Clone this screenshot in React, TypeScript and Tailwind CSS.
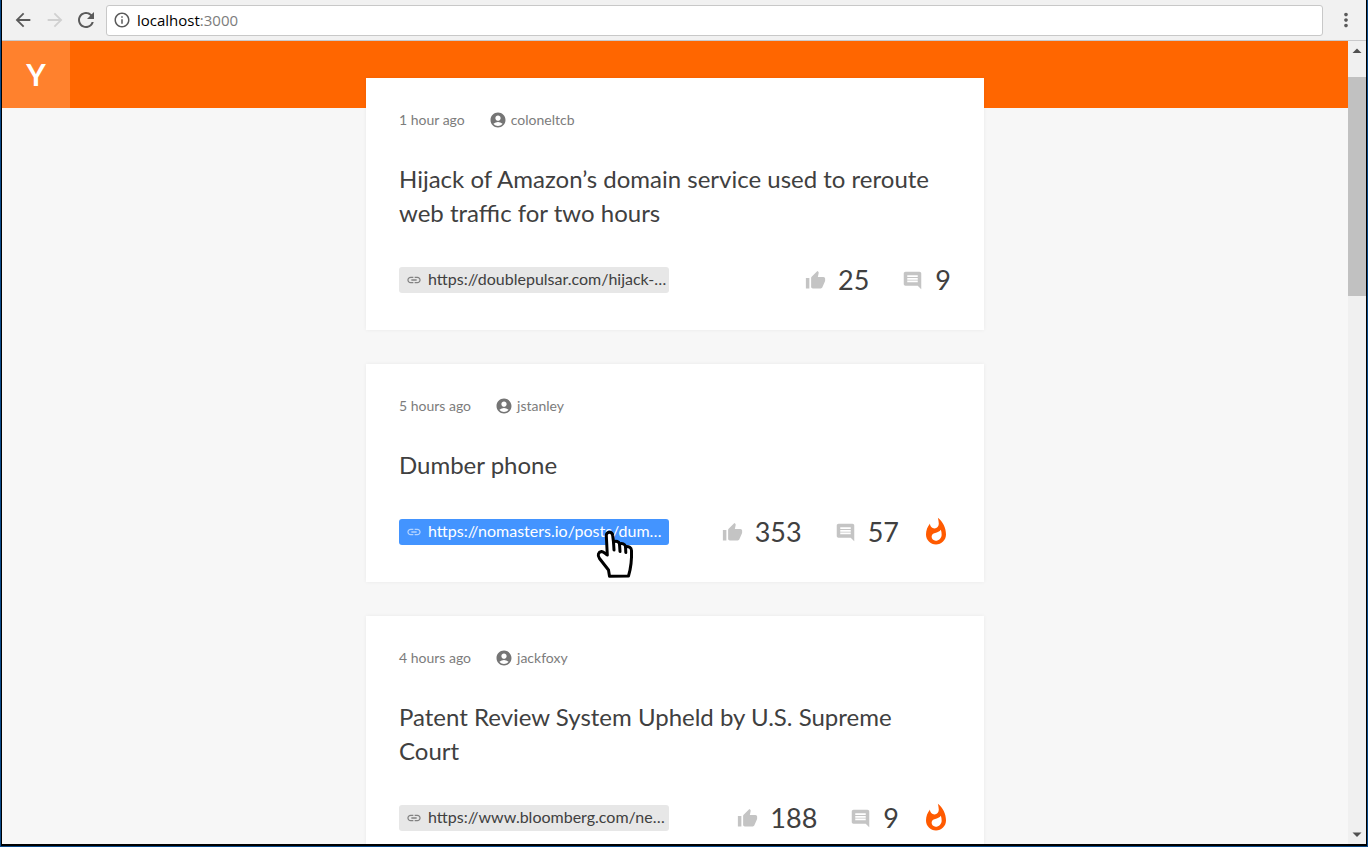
import {
  MdAccountCircle,
  MdArrowBack,
  MdArrowForward,
  MdInfoOutline,
  MdInsertComment,
  MdLink,
  MdMoreVert,
  MdRefresh,
  MdThumbUp,
  MdWhatshot,
} from "react-icons/md";

type Story = {
  age: string;
  author: string;
  title: string;
  url: string;
  votes: number;
  comments: number;
  hot?: boolean;
  active?: boolean;
};

const stories: Story[] = [
  {
    age: "1 hour ago",
    author: "coloneltcb",
    title: "Hijack of Amazon’s domain service used to reroute web traffic for two hours",
    url: "https://doublepulsar.com/hijack-…",
    votes: 25,
    comments: 9,
  },
  {
    age: "5 hours ago",
    author: "jstanley",
    title: "Dumber phone",
    url: "https://nomasters.io/posts/dum…",
    votes: 353,
    comments: 57,
    hot: true,
    active: true,
  },
  {
    age: "4 hours ago",
    author: "jackfoxy",
    title: "Patent Review System Upheld by U.S. Supreme Court",
    url: "https://www.bloomberg.com/ne…",
    votes: 188,
    comments: 9,
    hot: true,
  },
];

function HandCursor() {
  return (
    <svg
      viewBox="0 0 38 50"
      className="pointer-events-none absolute top-[11px] left-[197px] z-10 h-[50px] w-[38px]"
      fill="#fff"
      stroke="#000"
      strokeWidth="3"
      strokeLinejoin="round"
      strokeLinecap="round"
      aria-hidden="true"
    >
      <path d="M13.5 46.3 L12.5 40 L3.5 28.5 C1 25 2.5 22 5.5 21.5 C8 22 9.500 24 11.300 25 L10.300 5.500 C10.300 1.200 16.300 1.200 16.700 5.500 L17.500 12 C20 10.500 23 11.500 23.500 14 C26 12.800 29 14 29.500 16.500 C33 16 35.300 17.500 35.500 20.500 C35.800 28 35.500 36 32.500 46 Z" />
      <path d="M17.500 12 L18 20 M23.500 14 L24 21.500 M29.500 16.500 L29.800 22.500" fill="none" />
    </svg>
  );
}

function StoryCard({ story }: { story: Story }) {
  return (
    <article className="bg-white p-[33px] shadow-[0_0_4px_rgba(0,0,0,0.06)]">
      <div className="flex items-center gap-6 text-[14px] leading-[18px] text-[#7c7c7c]">
        <span>{story.age}</span>
        <a href="#author" className="flex items-center gap-1">
          <MdAccountCircle className="size-[18px] text-[#757575]" />
          {story.author}
        </a>
      </div>
      <h2 className="mt-[33px] text-[24px] leading-[34px] text-[#404040]">{story.title}</h2>
      <div className="mt-[33px] flex h-[34px] items-center justify-between">
        <div className="relative">
          <a
            href="#story"
            className={
              story.active
                ? "flex h-[26px] w-[270px] items-center gap-1.5 rounded-[3px] bg-[#4394ff] px-[7px] text-white"
                : "flex h-[26px] w-[270px] items-center gap-1.5 rounded-[3px] bg-[#e7e7e7] px-[7px] text-[#404040]"
            }
          >
            <MdLink className="size-4 shrink-0 opacity-60" />
            <span className="pb-0.5 text-base leading-6 whitespace-nowrap">{story.url}</span>
          </a>
          {story.active && <HandCursor />}
        </div>
        <div className="flex items-center text-[27px] leading-[34px] text-[#404040]">
          <span className="flex items-center gap-3">
            <MdThumbUp className="size-[21px] text-[#c4c4c4]" />
            {story.votes}
          </span>
          <span className="ml-[33px] flex items-center gap-3">
            <MdInsertComment className="size-[21px] text-[#c4c4c4]" />
            {story.comments}
          </span>
          {story.hot && <MdWhatshot className="ml-[22px] size-[30px] text-[#ff5a00]" />}
        </div>
      </div>
    </article>
  );
}

function BrowserBar() {
  return (
    <div className="flex h-[41px] shrink-0 items-center border-b border-[#c9c9cb] bg-[#f1f1f1] pr-[9px] pl-2.5">
      <button type="button" aria-label="Back" className="text-[#5a5a5a]">
        <MdArrowBack className="size-[22px]" />
      </button>
      <button type="button" aria-label="Forward" className="ml-2.5 text-[#d0d0d0]">
        <MdArrowForward className="size-[22px]" />
      </button>
      <button type="button" aria-label="Reload" className="ml-2 text-[#5a5a5a]">
        <MdRefresh className="size-6" />
      </button>
      <div className="ml-2 flex h-[31px] flex-1 items-center gap-1.5 rounded-[3px] border border-[#c8c8c8] bg-white px-1.5">
        <MdInfoOutline className="size-[18px] text-[#5a5a5a]" />
        <span className="font-['Open_Sans',sans-serif] text-[15px] leading-5 text-[#7c7c7c]">
          <span className="text-black">localhost</span>:3000
        </span>
      </div>
      <button type="button" aria-label="Menu" className="ml-3 text-[#5a5a5a]">
        <MdMoreVert className="size-[22px]" />
      </button>
    </div>
  );
}

function ScrollBar() {
  return (
    <div className="flex w-[18px] shrink-0 flex-col items-center bg-[#f0f0f0]" aria-hidden="true">
      <svg viewBox="0 0 18 36" className="h-9 w-[18px]">
        <path d="M4.500 12 L9 7.500 L13.500 12 Z" fill="#505050" />
      </svg>
      <div className="h-[219px] w-full bg-[#c1c1c1]" />
      <svg viewBox="0 0 18 18" className="mt-auto h-[18px] w-[18px]">
        <path d="M4.500 6.500 L9 11 L13.500 6.500 Z" fill="#505050" />
      </svg>
    </div>
  );
}

export default function App() {
  return (
    <div className="h-screen border-x border-b border-[#0a4a8a] font-[Lato,sans-serif]">
      <div className="flex h-full flex-col overflow-hidden border-x border-b-2 border-black bg-[#f7f7f7]">
        <BrowserBar />
        <div className="flex min-h-0 flex-1">
          <div className="min-w-0 flex-1 overflow-hidden">
            <header className="flex h-[67px] bg-[#ff6600]">
              <a
                href="#home"
                className="flex w-[68px] items-center justify-center bg-[#ff812d] pb-0.5 text-[30px] leading-9 font-bold text-white"
              >
                Y
              </a>
            </header>
            <main className="relative mx-auto -mt-[30px] flex w-full max-w-[618px] flex-col gap-[34px]">
              {stories.map((story) => (
                <StoryCard key={story.author} story={story} />
              ))}
            </main>
          </div>
          <ScrollBar />
        </div>
      </div>
    </div>
  );
}
